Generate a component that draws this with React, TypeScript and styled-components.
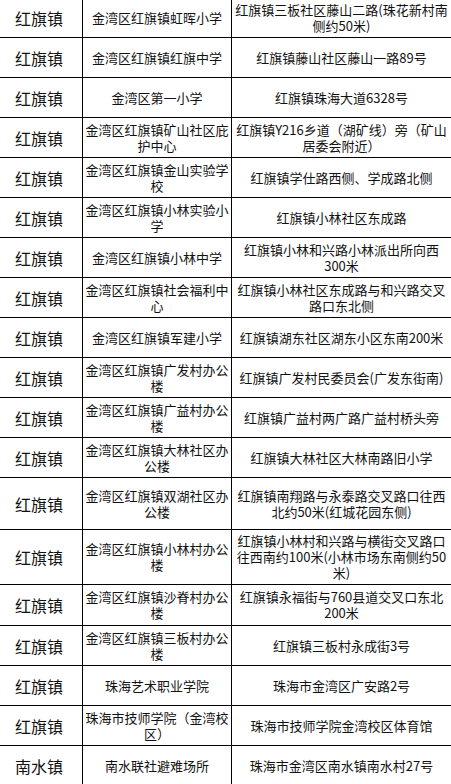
import React from 'react';
import styled, { createGlobalStyle } from 'styled-components';

const GlobalStyle = createGlobalStyle`
  html, body {
    margin: 0;
    padding: 0;
    background: #ffffff;
  }
  body {
    width: 451px;
    height: 784px;
    overflow: hidden;
    font-family: 'Noto Sans CJK SC', 'Noto Sans', sans-serif;
    color: #111;
  }
`;

const Table = styled.div`
  display: flex;
  flex-direction: column;
  width: 451px;
  margin-top: -2px;
`;

const Row = styled.div<{ $h: number }>`
  display: grid;
  grid-template-columns: 82px 149px 220px;
  height: ${(p) => p.$h}px;
  border-bottom: 1px solid #000;
  box-sizing: border-box;
`;

const TownCell = styled.div`
  display: flex;
  align-items: center;
  justify-content: center;
  padding-right: 4px;
  font-size: 16px;
  line-height: 20px;
  color: #111;
`;

const Cell = styled.div`
  display: flex;
  align-items: center;
  justify-content: center;
  text-align: center;
  border-left: 1px solid #000;
  padding: 0 2px;
  box-sizing: border-box;
  font-size: 13px;
  line-height: 16px;
  color: #111;
  overflow: hidden;
`;

interface Shelter {
  town: string;
  name: string;
  address: string;
  h?: number;
}

const shelters: Shelter[] = [
  { town: '红旗镇', name: '金湾区红旗镇虹晖小学', address: '红旗镇三板社区藤山二路(珠花新村南侧约50米)' },
  { town: '红旗镇', name: '金湾区红旗镇红旗中学', address: '红旗镇藤山社区藤山一路89号' },
  { town: '红旗镇', name: '金湾区第一小学', address: '红旗镇珠海大道6328号' },
  { town: '红旗镇', name: '金湾区红旗镇矿山社区庇护中心', address: '红旗镇Y216乡道（湖矿线）旁（矿山居委会附近）' },
  { town: '红旗镇', name: '金湾区红旗镇金山实验学校', address: '红旗镇学仕路西侧、学成路北侧' },
  { town: '红旗镇', name: '金湾区红旗镇小林实验小学', address: '红旗镇小林社区东成路' },
  { town: '红旗镇', name: '金湾区红旗镇小林中学', address: '红旗镇小林和兴路小林派出所向西300米' },
  { town: '红旗镇', name: '金湾区红旗镇社会福利中心', address: '红旗镇小林社区东成路与和兴路交叉路口东北侧' },
  { town: '红旗镇', name: '金湾区红旗镇军建小学', address: '红旗镇湖东社区湖东小区东南200米' },
  { town: '红旗镇', name: '金湾区红旗镇广发村办公楼', address: '红旗镇广发村民委员会(广发东街南)' },
  { town: '红旗镇', name: '金湾区红旗镇广益村办公楼', address: '红旗镇广益村两广路广益村桥头旁' },
  { town: '红旗镇', name: '金湾区红旗镇大林社区办公楼', address: '红旗镇大林社区大林南路旧小学' },
  { town: '红旗镇', name: '金湾区红旗镇双湖社区办公楼', address: '红旗镇南翔路与永泰路交叉路口往西北约50米(红城花园东侧)', h: 52 },
  { town: '红旗镇', name: '金湾区红旗镇小林村办公楼', address: '红旗镇小林村和兴路与横街交叉路口往西南约100米(小林市场东南侧约50米)', h: 55 },
  { town: '红旗镇', name: '金湾区红旗镇沙脊村办公楼', address: '红旗镇永福街与760县道交叉口东北200米', h: 41 },
  { town: '红旗镇', name: '金湾区红旗镇三板村办公楼', address: '红旗镇三板村永成街3号' },
  { town: '红旗镇', name: '珠海艺术职业学院', address: '珠海市金湾区广安路2号' },
  { town: '红旗镇', name: '珠海市技师学院（金湾校区）', address: '珠海市技师学院金湾校区体育馆' },
  { town: '南水镇', name: '南水联社避难场所', address: '珠海市金湾区南水镇南水村27号' },
];

export default function App() {
  return (
    <>
      <GlobalStyle />
      <Table>
        {shelters.map((s, i) => (
          <Row key={i} $h={s.h ?? 40}>
            <TownCell>{s.town}</TownCell>
            <Cell>{s.name}</Cell>
            <Cell>{s.address}</Cell>
          </Row>
        ))}
      </Table>
    </>
  );
}
